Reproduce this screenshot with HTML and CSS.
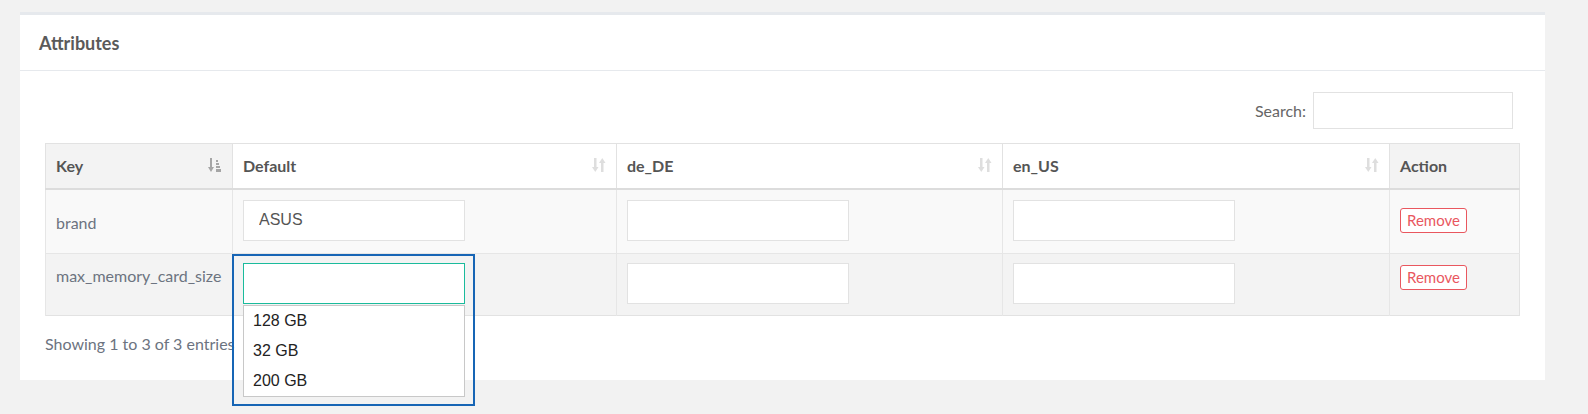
FILE: index.html
```html
<!DOCTYPE html>
<html>
<head>
<meta charset="utf-8">
<link rel="stylesheet" href="styles.css">
</head>
<body>
<div class="panel">
  <div class="panel-title"><h2>Attributes</h2></div>
  <div class="panel-content">
    <div class="search-row">
      <label class="search-label">Search:</label>
      <input class="search-input" type="text">
    </div>
    <table class="attr-table">
      <colgroup>
        <col class="c-key"><col class="c-def"><col class="c-de"><col class="c-en"><col class="c-act">
      </colgroup>
      <thead>
        <tr>
          <th class="sorted">
            <div class="th-inner"><span>Key</span>
              <svg class="sort-icon dark" width="14" height="15" viewBox="0 0 14 15">
                <rect x="2" y="0" width="2" height="10"/>
                <path d="M0 9 L6 9 L3 14 Z"/>
                <rect x="8" y="2" width="2" height="2"/>
                <rect x="8" y="5" width="3" height="2"/>
                <rect x="8" y="8" width="4" height="2"/>
                <rect x="8" y="11" width="5" height="3"/>
              </svg>
            </div>
          </th>
          <th>
            <div class="th-inner"><span>Default</span>
              <svg class="sort-icon light" width="14" height="15" viewBox="0 0 14 15">
                <rect x="2" y="0" width="2.5" height="10"/>
                <path d="M0 9 L6.5 9 L3.25 14 Z"/>
                <rect x="9" y="4" width="2.5" height="10"/>
                <path d="M7 5 L13.5 5 L10.25 0 Z"/>
              </svg>
            </div>
          </th>
          <th>
            <div class="th-inner"><span>de_DE</span>
              <svg class="sort-icon light" width="14" height="15" viewBox="0 0 14 15">
                <rect x="2" y="0" width="2.5" height="10"/>
                <path d="M0 9 L6.5 9 L3.25 14 Z"/>
                <rect x="9" y="4" width="2.5" height="10"/>
                <path d="M7 5 L13.5 5 L10.25 0 Z"/>
              </svg>
            </div>
          </th>
          <th>
            <div class="th-inner"><span>en_US</span>
              <svg class="sort-icon light" width="14" height="15" viewBox="0 0 14 15">
                <rect x="2" y="0" width="2.5" height="10"/>
                <path d="M0 9 L6.5 9 L3.25 14 Z"/>
                <rect x="9" y="4" width="2.5" height="10"/>
                <path d="M7 5 L13.5 5 L10.25 0 Z"/>
              </svg>
            </div>
          </th>
          <th class="action-head"><div class="th-inner"><span>Action</span></div></th>
        </tr>
      </thead>
      <tbody>
        <tr class="row-odd">
          <td class="key">brand</td>
          <td><input class="cell-input" type="text" value="ASUS"></td>
          <td><input class="cell-input" type="text"></td>
          <td><input class="cell-input" type="text"></td>
          <td><button class="btn-remove">Remove</button></td>
        </tr>
        <tr class="row-even">
          <td class="key">max_memory_card_size</td>
          <td>
            <div class="combo">
              <input class="cell-input focused" type="text">
              <ul class="dropdown">
                <li>128 GB</li>
                <li>32 GB</li>
                <li>200 GB</li>
              </ul>
              <div class="highlight"></div>
            </div>
          </td>
          <td><input class="cell-input" type="text"></td>
          <td><input class="cell-input" type="text"></td>
          <td><button class="btn-remove">Remove</button></td>
        </tr>
      </tbody>
    </table>
    <div class="info">Showing 1 to 3 of 3 entries</div>
  </div>
</div>
</body>
</html>
```
FILE: styles.css
```css
html {
  height: 414px;
  overflow: hidden;
}

body {
  margin: 0;
  padding: 0;
  height: 414px;
  overflow: hidden;
  background: #f2f2f2;
  font-family: Lato, "Liberation Sans", sans-serif;
  font-size: 16px;
  color: #6c7380;
}

.panel {
  margin: 12px 43px 0 20px;
  background: #fff;
  border-top: 3px solid #e6e9ed;
  box-sizing: border-box;
  height: 368px;
}

.panel-title {
  height: 55px;
  border-bottom: 1px solid #e6e9ed;
  display: flex;
  align-items: center;
  padding-left: 19px;
}

.panel-title h2 {
  margin: 0;
  font-size: 18px;
  font-weight: 700;
  color: #5a5a5a;
}

.panel-content {
  padding: 21px 25px 0 25px;
}

.search-row {
  display: flex;
  justify-content: flex-end;
  align-items: center;
  gap: 7px;
  padding-right: 7px;
  height: 36px;
}

.search-label {
  color: #666;
  font-size: 16px;
}

.search-input {
  width: 200px;
  height: 37px;
  box-sizing: border-box;
  border: 1px solid #e2e2e2;
  background: #fff;
  margin: 0;
}

.attr-table {
  margin-top: 15px;
  width: 100%;
  border-collapse: collapse;
  table-layout: fixed;
  border: 1px solid #e2e2e2;
}

.c-key { width: 187px; }
.c-def { width: 384px; }
.c-de { width: 386px; }
.c-en { width: 387px; }

.attr-table th {
  height: 45px;
  padding: 0 10px;
  text-align: left;
  font-weight: 700;
  font-size: 16px;
  color: #555;
  background: #fff;
  border-left: 1px solid #e2e2e2;
  border-bottom: 2px solid #dcdcdc;
  box-sizing: border-box;
}

.attr-table th.sorted,
.attr-table th.action-head {
  background: #f3f3f3;
}

.th-inner {
  display: flex;
  justify-content: space-between;
  align-items: center;
}

.sort-icon.dark { fill: #a5a5a5; }
.sort-icon.light { fill: #dedede; }

.attr-table td {
  box-sizing: border-box;
  border-left: 1px solid #e6e6e6;
  border-top: 1px solid #e6e6e6;
  padding: 0 10px;
  font-size: 16px;
  color: #6c7380;
}

.row-odd td {
  background: #f9f9f9;
  height: 65px;
  vertical-align: middle;
}

.row-odd td.key {
  padding-top: 2px;
}

.row-even td {
  background: #f3f3f3;
  height: 62px;
  vertical-align: top;
  padding-top: 9px;
}

.row-even td.key {
  padding-top: 12px;
}

.row-even td:last-child {
  padding-top: 11px;
}

.cell-input {
  display: block;
  width: 222px;
  height: 41px;
  box-sizing: border-box;
  border: 1px solid #e2e2e2;
  background: #fff;
  padding: 0 15px;
  margin: 0;
  font-family: "Liberation Sans", Arial, sans-serif;
  font-size: 16px;
  color: #555;
}

.row-odd .cell-input {
  margin-top: -2px;
}

.cell-input.focused {
  border-color: #1abb9c;
}

.combo {
  position: relative;
  width: 222px;
}

.dropdown {
  position: absolute;
  left: 0;
  top: 42px;
  width: 222px;
  box-sizing: border-box;
  margin: 0;
  padding: 0;
  list-style: none;
  background: #fff;
  border: 1px solid #c8c8c8;
  z-index: 2;
}

.dropdown li {
  height: 30px;
  line-height: 30px;
  padding-left: 9px;
  font-family: "Liberation Sans", Arial, sans-serif;
  font-size: 16px;
  color: #222;
}

.highlight {
  position: absolute;
  left: -11px;
  top: -9px;
  width: 243px;
  height: 152px;
  box-sizing: border-box;
  border: 2px solid #1765b5;
  z-index: 3;
  pointer-events: none;
}

.btn-remove {
  font-family: Lato, "Liberation Sans", sans-serif;
  font-size: 15px;
  color: #e9575f;
  background: #fff;
  border: 1px solid #e9575f;
  border-radius: 3px;
  padding: 0 6px;
  height: 25px;
  line-height: 23px;
  margin-top: -4px;
}

.row-even .btn-remove {
  margin-top: 0;
}

.info {
  margin-top: 18px;
  color: #6c7380;
  font-size: 16px;
}
```
